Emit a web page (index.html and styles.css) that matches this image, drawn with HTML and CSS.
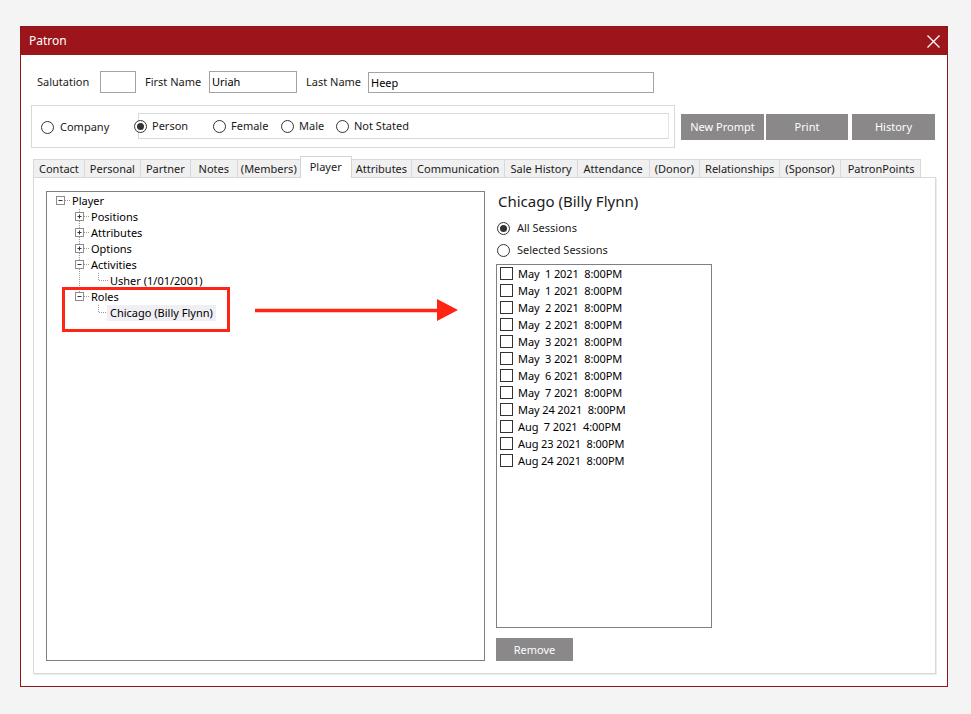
FILE: index.html
```html
<!DOCTYPE html>
<html>
<head>
<meta charset="utf-8">
<title>Patron</title>
<link rel="stylesheet" href="styles.css">
</head>
<body>
<div class="window">
  <div class="titlebar">
    <span class="title">Patron</span>
    <svg class="close" width="13" height="13" viewBox="0 0 13 13"><path d="M0.5 0.5 L12.5 12.5 M12.5 0.5 L0.5 12.5" stroke="#fff" stroke-width="1.3" fill="none"/></svg>
  </div>
  <div class="body">
    <div class="row-names">
      <span class="lbl lbl-sal">Salutation</span><div class="field f-sal"></div>
      <span class="lbl lbl-first">First Name</span><div class="field f-first">Uriah</div>
      <span class="lbl lbl-last">Last Name</span><div class="field f-last">Heep</div>
    </div>
    <div class="row-type">
      <div class="typebox">
        <div class="radio-item w-company"><span class="radio"></span>Company</div>
        <div class="gender-box">
          <div class="radio-item w-person first"><span class="radio checked"></span>Person</div>
          <div class="radio-item w-female"><span class="radio"></span>Female</div>
          <div class="radio-item w-male"><span class="radio"></span>Male</div>
          <div class="radio-item"><span class="radio"></span>Not Stated</div>
        </div>
      </div>
      <div class="btn btn-np">New Prompt</div>
      <div class="btn btn-print">Print</div>
      <div class="btn btn-hist">History</div>
    </div>
    <div class="tabs">
      <div class="tab">Contact</div>
      <div class="tab">Personal</div>
      <div class="tab">Partner</div>
      <div class="tab">Notes</div>
      <div class="tab tab-tight">(Members)</div>
      <div class="tab active">Player</div>
      <div class="tab tab-attr">Attributes</div>
      <div class="tab">Communication</div>
      <div class="tab">Sale History</div>
      <div class="tab tab-att">Attendance</div>
      <div class="tab">(Donor)</div>
      <div class="tab">Relationships</div>
      <div class="tab">(Sponsor)</div>
      <div class="tab tab-pp">PatronPoints</div>
    </div>
    <div class="panel">
      <div class="tree">
        <div class="trow">
          <svg class="pre" width="25" height="16" viewBox="0 0 25 16">
            <rect x="9.5" y="3.5" width="8" height="8" fill="#fff" stroke="#8c8c8c"/>
            <path d="M11.5 7.5 H15.5" stroke="#333"/>
            <path d="M18 7.5 H24" stroke="#999" stroke-dasharray="1 1"/>
          </svg><span class="ttext">Player</span>
        </div>
        <div class="trow">
          <svg class="pre" width="44" height="16" viewBox="0 0 44 16">
            <path d="M32.5 0 V16" stroke="#999" stroke-dasharray="1 1"/>
            <rect x="28.5" y="3.5" width="8" height="8" fill="#fff" stroke="#8c8c8c"/>
            <path d="M30.5 7.5 H34.5 M32.5 5.5 V9.5" stroke="#333"/>
            <path d="M37 7.5 H43" stroke="#999" stroke-dasharray="1 1"/>
          </svg><span class="ttext">Positions</span>
        </div>
        <div class="trow">
          <svg class="pre" width="44" height="16" viewBox="0 0 44 16">
            <path d="M32.5 0 V16" stroke="#999" stroke-dasharray="1 1"/>
            <rect x="28.5" y="3.5" width="8" height="8" fill="#fff" stroke="#8c8c8c"/>
            <path d="M30.5 7.5 H34.5 M32.5 5.5 V9.5" stroke="#333"/>
            <path d="M37 7.5 H43" stroke="#999" stroke-dasharray="1 1"/>
          </svg><span class="ttext">Attributes</span>
        </div>
        <div class="trow">
          <svg class="pre" width="44" height="16" viewBox="0 0 44 16">
            <path d="M32.5 0 V16" stroke="#999" stroke-dasharray="1 1"/>
            <rect x="28.5" y="3.5" width="8" height="8" fill="#fff" stroke="#8c8c8c"/>
            <path d="M30.5 7.5 H34.5 M32.5 5.5 V9.5" stroke="#333"/>
            <path d="M37 7.5 H43" stroke="#999" stroke-dasharray="1 1"/>
          </svg><span class="ttext">Options</span>
        </div>
        <div class="trow">
          <svg class="pre" width="44" height="16" viewBox="0 0 44 16">
            <path d="M32.5 0 V16" stroke="#999" stroke-dasharray="1 1"/>
            <rect x="28.5" y="3.5" width="8" height="8" fill="#fff" stroke="#8c8c8c"/>
            <path d="M30.5 7.5 H34.5" stroke="#333"/>
            <path d="M37 7.5 H43" stroke="#999" stroke-dasharray="1 1"/>
          </svg><span class="ttext">Activities</span>
        </div>
        <div class="trow">
          <svg class="pre" width="63" height="16" viewBox="0 0 63 16">
            <path d="M32.5 0 V16" stroke="#999" stroke-dasharray="1 1"/>
            <path d="M51.5 0 V8" stroke="#999" stroke-dasharray="1 1"/>
            <path d="M52 7.5 H62" stroke="#999" stroke-dasharray="1 1"/>
          </svg><span class="ttext">Usher (1/01/2001)</span>
        </div>
        <div class="trow">
          <svg class="pre" width="44" height="16" viewBox="0 0 44 16">
            <path d="M32.5 0 V4" stroke="#999" stroke-dasharray="1 1"/>
            <rect x="28.5" y="3.5" width="8" height="8" fill="#fff" stroke="#8c8c8c"/>
            <path d="M30.5 7.5 H34.5" stroke="#333"/>
            <path d="M37 7.5 H43" stroke="#999" stroke-dasharray="1 1"/>
          </svg><span class="ttext">Roles</span>
        </div>
        <div class="trow">
          <svg class="pre" width="60" height="16" viewBox="0 0 60 16">
            <path d="M51.5 0 V8" stroke="#999" stroke-dasharray="1 1"/>
            <path d="M52 7.5 H60" stroke="#999" stroke-dasharray="1 1"/>
          </svg><span class="ttext selected">Chicago (Billy Flynn)</span>
        </div>
      </div>
      <div class="detail">
        <div class="heading">Chicago (Billy Flynn)</div>
        <div class="radio-item srow first-srow"><span class="radio checked"></span>All Sessions</div>
        <div class="radio-item srow"><span class="radio"></span>Selected Sessions</div>
        <div class="sessions">
          <div class="sess"><span class="cb"></span><span class="stext">May  1 2021  8:00PM</span></div>
          <div class="sess"><span class="cb"></span><span class="stext">May  1 2021  8:00PM</span></div>
          <div class="sess"><span class="cb"></span><span class="stext">May  2 2021  8:00PM</span></div>
          <div class="sess"><span class="cb"></span><span class="stext">May  2 2021  8:00PM</span></div>
          <div class="sess"><span class="cb"></span><span class="stext">May  3 2021  8:00PM</span></div>
          <div class="sess"><span class="cb"></span><span class="stext">May  3 2021  8:00PM</span></div>
          <div class="sess"><span class="cb"></span><span class="stext">May  6 2021  8:00PM</span></div>
          <div class="sess"><span class="cb"></span><span class="stext">May  7 2021  8:00PM</span></div>
          <div class="sess"><span class="cb"></span><span class="stext">May 24 2021  8:00PM</span></div>
          <div class="sess"><span class="cb"></span><span class="stext">Aug  7 2021  4:00PM</span></div>
          <div class="sess"><span class="cb"></span><span class="stext">Aug 23 2021  8:00PM</span></div>
          <div class="sess"><span class="cb"></span><span class="stext">Aug 24 2021  8:00PM</span></div>
        </div>
        <div class="btn btn-remove">Remove</div>
      </div>
      <svg class="annotation" width="440" height="170" viewBox="0 0 440 170">
        <rect x="29.5" y="110.5" width="165" height="42" fill="none" stroke="#ff2414" stroke-width="3"/>
        <path d="M221 132.5 H405" stroke="#ff2414" stroke-width="3.5"/>
        <polygon points="403,121 424,132 403,143" fill="#ff2414"/>
      </svg>
    </div>
  </div>
</div>
</body>
</html>
```

FILE: styles.css
```css
* { box-sizing: border-box; }

html, body {
  margin: 0;
  padding: 0;
  background: #f4f4f4;
}

body {
  padding: 26px 0 0 20px;
  font-family: "Noto Sans", "DejaVu Sans", sans-serif;
  font-size: 11px;
  color: #1a1a1a;
}

.window {
  width: 928px;
  height: 661px;
  border: 1px solid #8e161b;
  background: #fff;
  display: flex;
  flex-direction: column;
}

.titlebar {
  height: 28px;
  background: #9c151a;
  display: flex;
  align-items: center;
  justify-content: space-between;
  padding: 0 7px 0 8px;
  flex-shrink: 0;
}

.title {
  color: #fff;
  font-size: 12px;
  line-height: 16px;
}

.close { display: block; }

.body {
  flex: 1;
  display: flex;
  flex-direction: column;
}

.row-names {
  display: flex;
  align-items: center;
  padding: 16px 0 0 16px;
  height: 38px;
}

.lbl { line-height: 22px; margin-top: -1px; }
.lbl-sal { width: 63px; }
.lbl-first { width: 64px; margin-left: 9px; }
.lbl-last { width: 62px; margin-left: 9px; }

.field {
  height: 22px;
  border: 1px solid #a3a3a3;
  background: #fff;
  line-height: 20px;
  padding-left: 2px;
  color: #000;
}
.f-sal { width: 36px; }
.f-first { width: 88px; }
.f-last { width: 286px; height: 21px; margin-top: 1px; }

.row-type {
  display: flex;
  align-items: flex-start;
  margin-top: 12px;
  margin-left: 10px;
}

.typebox {
  width: 644px;
  height: 43px;
  border: 1px solid #d9d9d9;
  display: flex;
  align-items: center;
  padding: 0 0 0 9px;
}

.radio-item {
  display: flex;
  align-items: center;
  line-height: 16px;
  white-space: nowrap;
}

.radio {
  width: 13px;
  height: 13px;
  border: 1px solid #333;
  border-radius: 50%;
  background: #fff;
  margin-right: 6px;
  display: flex;
  align-items: center;
  justify-content: center;
  flex-shrink: 0;
}
.radio.checked::after {
  content: "";
  width: 7px;
  height: 7px;
  border-radius: 50%;
  background: #333;
}

.w-company { width: 97px; margin-top: 1px; }

.gender-box {
  width: 531px;
  height: 26px;
  border: 1px solid #d9d9d9;
  border-right-color: #e3e3e3;
  display: flex;
  align-items: center;
  margin-top: -1px;
}

.gender-box .radio-item.first { margin-left: -5px; }
.w-person { width: 79px; }
.w-female { width: 68px; }
.w-male { width: 55px; }
.gender-box .radio { margin-right: 5px; }

.btn {
  background: #8a8889;
  color: #fff;
  height: 26px;
  line-height: 26px;
  text-align: center;
  font-size: 11px;
}
.btn-np { width: 83px; margin-left: 6px; margin-top: 9px; }
.btn-print { width: 82px; margin-left: 2px; margin-top: 9px; }
.btn-hist { width: 83px; margin-left: 4px; margin-top: 9px; }

.tabs {
  display: flex;
  align-items: flex-end;
  margin-top: 8px;
  margin-left: 12px;
  height: 21px;
  position: relative;
  z-index: 2;
}

.tab {
  height: 18px;
  line-height: 17px;
  border: 1px solid #d9d9d9;
  border-bottom: none;
  background: #f0f0f0;
  padding: 0 5px;
  min-width: 48px;
  text-align: center;
  margin-left: -1px;
  white-space: nowrap;
}
.tab:first-child { margin-left: 0; }
.tab-tight { padding: 0 3px; }
.tab-attr { padding: 0 4px; }
.tab-att { padding: 0 6px; }
.tab-pp { padding: 0 6px 0 7px; }

.tab.active {
  height: 22px;
  background: #fff;
  line-height: 19px;
  margin-bottom: -1px;
  position: relative;
  z-index: 3;
  border-color: #d4d4d4;
  padding: 0 9px;
}

.panel {
  position: relative;
  margin-left: 12px;
  width: 903px;
  height: 497px;
  border: 1px solid #d9d9d9;
  box-shadow: 1px 1px 0 #ececec;
  display: flex;
  align-items: flex-start;
  padding: 13px 0 0 12px;
}

.tree {
  width: 439px;
  height: 470px;
  border: 1px solid #7f7f87;
  padding-top: 1px;
  flex-shrink: 0;
}

.trow {
  display: flex;
  height: 16px;
  align-items: center;
}
.pre { display: block; flex-shrink: 0; }
.ttext { line-height: 16px; color: #000; white-space: nowrap; }
.ttext.selected {
  background: #efeff4;
  padding: 0 3px;
}

.detail {
  margin-left: 11px;
  display: flex;
  flex-direction: column;
}

.heading {
  font-size: 15px;
  line-height: 22px;
  color: #1a1a1a;
  padding-left: 2px;
  margin-top: -1px;
}

.srow { height: 22px; padding-left: 1px; }
.first-srow { margin-top: 5px; }
.srow .radio { margin-right: 7px; }

.sessions {
  width: 216px;
  height: 364px;
  border: 1px solid #7f7f87;
  margin-top: 3px;
  padding: 0 0 0 3px;
}

.sess {
  display: flex;
  align-items: center;
  height: 17px;
}

.cb {
  width: 13px;
  height: 13px;
  border: 1px solid #333;
  background: #fff;
  margin-right: 5px;
  flex-shrink: 0;
}

.stext { white-space: pre; color: #000; line-height: 17px; letter-spacing: -0.1px; }

.btn-remove {
  width: 77px;
  height: 23px;
  line-height: 23px;
  margin-top: 10px;
}

.annotation {
  position: absolute;
  left: 0;
  top: 0;
  pointer-events: none;
}
```
